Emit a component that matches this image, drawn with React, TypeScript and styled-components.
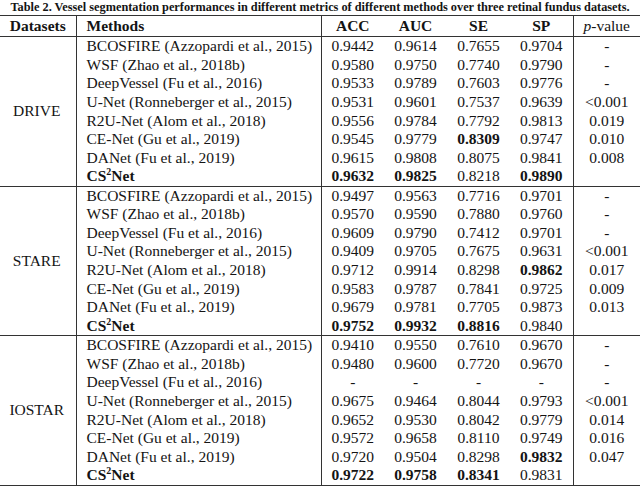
import React from "react";
import styled, { createGlobalStyle } from "styled-components";

const Global = createGlobalStyle`
  html, body { margin: 0; padding: 0; background: #fff; }
  body { font-family: "Liberation Serif", "Times New Roman", serif; color: #141414; }
`;

const Page = styled.div`
  width: 640px;
  height: 490px;
  overflow: hidden;
  display: flex;
  flex-direction: column;
  font-family: "Liberation Serif", "Times New Roman", serif;
`;

const Caption = styled.div`
  height: 15px;
  line-height: 15px;
  font-size: 12.3px;
  font-weight: bold;
  text-align: center;
  white-space: nowrap;
`;

const Table = styled.table`
  border-collapse: collapse;
  table-layout: fixed;
  width: 640px;
  font-family: "Liberation Serif", "Times New Roman", serif;
  font-size: 15.5px;
  color: #141414;
  border-top: 1px solid #333;
  border-bottom: 1px solid #333;
`;

const HeadRow = styled.tr`
  height: 21px;
`;

const Row = styled.tr<{ $first?: boolean }>`
  height: 18.7px;
  border-top: ${(p) => (p.$first ? "1px solid #333" : "none")};
`;

const Th = styled.th<{ $left?: boolean; $rule?: boolean; $plain?: boolean }>`
  padding: ${(p) => (p.$left ? "0 0 0 10px" : "0")};
  font-weight: ${(p) => (p.$plain ? "normal" : "bold")};
  text-align: ${(p) => (p.$left ? "left" : "center")};
  border-right: ${(p) => (p.$rule ? "1px solid #333" : "none")};
  line-height: 20px;
  white-space: nowrap;
`;

const Td = styled.td<{ $left?: boolean; $rule?: boolean; $bold?: boolean }>`
  padding: ${(p) => (p.$left ? "0 0 0 10px" : "0")};
  font-weight: ${(p) => (p.$bold ? "bold" : "normal")};
  text-align: ${(p) => (p.$left ? "left" : "center")};
  border-right: ${(p) => (p.$rule ? "1px solid #333" : "none")};
  line-height: 18px;
  white-space: nowrap;
  vertical-align: middle;
`;

const DatasetCell = styled.td`
  text-align: center;
  vertical-align: middle;
  border-right: 1px solid #333;
  padding: 0 2px 0 0;
  line-height: 18px;
`;

const Sup = styled.sup`
  font-size: 10px;
  vertical-align: 6px;
  line-height: 0;
`;

const Italic = styled.i`
  font-style: italic;
`;

type Cell = string | [string];

const methodNames: React.ReactNode[] = [
  "BCOSFIRE (Azzopardi et al., 2015)",
  "WSF (Zhao et al., 2018b)",
  "DeepVessel (Fu et al., 2016)",
  "U-Net (Ronneberger et al., 2015)",
  "R2U-Net (Alom et al., 2018)",
  "CE-Net (Gu et al., 2019)",
  "DANet (Fu et al., 2019)",
  (
    <>
      CS<Sup>2</Sup>Net
    </>
  ),
];

const data: { name: string; rows: { vals: Cell[]; p: string }[] }[] = [
  {
    name: "DRIVE",
    rows: [
      { vals: ["0.9442", "0.9614", "0.7655", "0.9704"], p: "-" },
      { vals: ["0.9580", "0.9750", "0.7740", "0.9790"], p: "-" },
      { vals: ["0.9533", "0.9789", "0.7603", "0.9776"], p: "-" },
      { vals: ["0.9531", "0.9601", "0.7537", "0.9639"], p: "<0.001" },
      { vals: ["0.9556", "0.9784", "0.7792", "0.9813"], p: "0.019" },
      { vals: ["0.9545", "0.9779", ["0.8309"], "0.9747"], p: "0.010" },
      { vals: ["0.9615", "0.9808", "0.8075", "0.9841"], p: "0.008" },
      { vals: [["0.9632"], ["0.9825"], "0.8218", ["0.9890"]], p: "" },
    ],
  },
  {
    name: "STARE",
    rows: [
      { vals: ["0.9497", "0.9563", "0.7716", "0.9701"], p: "-" },
      { vals: ["0.9570", "0.9590", "0.7880", "0.9760"], p: "-" },
      { vals: ["0.9609", "0.9790", "0.7412", "0.9701"], p: "-" },
      { vals: ["0.9409", "0.9705", "0.7675", "0.9631"], p: "<0.001" },
      { vals: ["0.9712", "0.9914", "0.8298", ["0.9862"]], p: "0.017" },
      { vals: ["0.9583", "0.9787", "0.7841", "0.9725"], p: "0.009" },
      { vals: ["0.9679", "0.9781", "0.7705", "0.9873"], p: "0.013" },
      { vals: [["0.9752"], ["0.9932"], ["0.8816"], "0.9840"], p: "" },
    ],
  },
  {
    name: "IOSTAR",
    rows: [
      { vals: ["0.9410", "0.9550", "0.7610", "0.9670"], p: "-" },
      { vals: ["0.9480", "0.9600", "0.7720", "0.9670"], p: "-" },
      { vals: ["-", "-", "-", "-"], p: "-" },
      { vals: ["0.9675", "0.9464", "0.8044", "0.9793"], p: "<0.001" },
      { vals: ["0.9652", "0.9530", "0.8042", "0.9779"], p: "0.014" },
      { vals: ["0.9572", "0.9658", "0.8110", "0.9749"], p: "0.016" },
      { vals: ["0.9720", "0.9504", "0.8298", ["0.9832"]], p: "0.047" },
      { vals: [["0.9722"], ["0.9758"], ["0.8341"], "0.9831"], p: "" },
    ],
  },
];

export default function App() {
  return (
    <Page>
      <Global />
      <Caption>
        Table 2. Vessel segmentation performances in different metrics of different methods over three retinal fundus datasets.
      </Caption>
      <Table>
        <colgroup>
          <col style={{ width: 76 }} />
          <col style={{ width: 245 }} />
          <col style={{ width: 63 }} />
          <col style={{ width: 63 }} />
          <col style={{ width: 63 }} />
          <col style={{ width: 63 }} />
          <col style={{ width: 67 }} />
        </colgroup>
        <thead>
          <HeadRow>
            <Th $rule>Datasets</Th>
            <Th $left $rule>
              Methods
            </Th>
            <Th>ACC</Th>
            <Th>AUC</Th>
            <Th>SE</Th>
            <Th $rule>SP</Th>
            <Th $plain>
              <Italic>p</Italic>-value
            </Th>
          </HeadRow>
        </thead>
        {data.map((block) => (
          <tbody key={block.name}>
            {block.rows.map((r, i) => {
              const last = i === block.rows.length - 1;
              return (
                <Row key={i} $first={i === 0}>
                  {i === 0 && <DatasetCell rowSpan={8}>{block.name}</DatasetCell>}
                  <Td $left $rule $bold={last}>
                    {methodNames[i]}
                  </Td>
                  {r.vals.map((v, j) => (
                    <Td key={j} $bold={Array.isArray(v)} $rule={j === 3}>
                      {Array.isArray(v) ? v[0] : v}
                    </Td>
                  ))}
                  <Td>{r.p}</Td>
                </Row>
              );
            })}
          </tbody>
        ))}
      </Table>
    </Page>
  );
}
